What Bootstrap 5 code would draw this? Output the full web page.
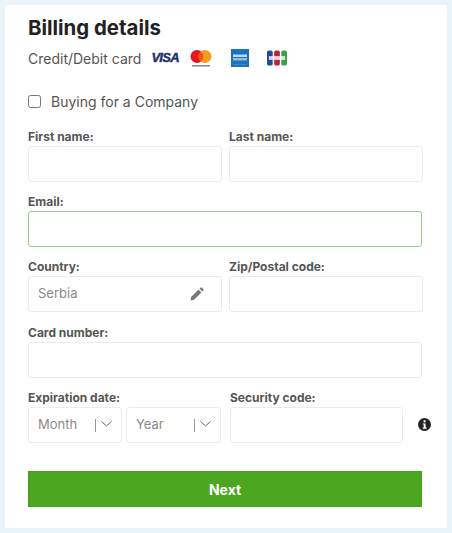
<!doctype html>
<html lang="en"><head><meta charset="utf-8"><title>Billing details</title>
<link rel="stylesheet" href="https://cdn.jsdelivr.net/npm/bootstrap@5.3.0/dist/css/bootstrap.min.css">
<style>
html,body{height:533px;overflow:hidden}
body{background:#e8f4f7;padding:5px;font-family:Inter,"Liberation Sans",sans-serif;color:#555}
.sheet{background:#fff;width:442px;height:523px;padding:11px 25px 0 23px}
.ttl{font-size:20.4px;line-height:24px;font-weight:700;color:#222;margin:0 0 6px}
.payrow{height:24px;font-size:14px;color:#555;margin-bottom:21px}
.payrow svg{display:block;flex:none}
.visa{font-family:"Liberation Sans",sans-serif;font-size:13px;font-weight:700;font-style:italic;color:#1c2f6e;-webkit-text-stroke:.4px #1c2f6e;letter-spacing:-.7px;margin-left:10px;width:27px;flex:none;line-height:14px}
.chk{height:20px;margin-bottom:16px;font-size:14px;color:#555;gap:10px}
.chkbox{width:13px;height:13px;border:1.3px solid #777;border-radius:2.5px;margin:0;flex:none;background:#fff;appearance:none}
.fgroup{margin-bottom:10px}
.fgroup.wide{margin-bottom:11px}
.flabel{display:block;font-size:12px;line-height:19px;font-weight:700;color:#555;margin:0;height:19px}
.fbox{height:36px;border:1.5px solid #ebebeb;border-radius:3px;background:#fff;width:100%;padding:0 9px;font-size:13px;color:#8a8a8a;outline:0}
.fbox.okay{border-color:#96cc87}
.gapx{gap:7px}
.half{width:194px;flex:none}
.mini{width:94px;flex:none;padding:0 9px}
.mini+.mini{width:95px}
.bar{width:1px;height:13px;background:#999;margin-right:5px;flex:none}
.mini svg{flex:none;margin-top:-3px}
.sec{width:173px;flex:none;margin-left:9px}
.info{flex:none;margin:0 0 12px 15px}
.gobtn{width:394px;height:36px;background:#4ca61f;border:1px solid #47a01c;border-radius:0;color:#fff;font-weight:700;font-size:14px;padding:0;margin-top:28px;display:block}
.gobtn:hover{background:#4ca61f;color:#fff}
</style></head><body>
<div class="sheet">
<h1 class="ttl">Billing details</h1>
<div class="payrow d-flex align-items-center">
<span>Credit/Debit card</span>
<span class="visa">VISA</span>
<svg width="22" height="17" viewBox="0 0 22 17" style="margin-left:12px"><circle cx="7" cy="6.500" r="6.500" fill="#e4161f"/><circle cx="15" cy="6.500" r="6.500" fill="#f59e1e"/><path d="M11 1.500a6.500 6.500 0 0 1 0 10a6.500 6.500 0 0 1 0-10" fill="#f0541c"/><rect x="2" y="15" width="18" height="1.500" fill="#888"/></svg>
<svg width="18" height="18" viewBox="0 0 18 18" style="margin-left:19px"><rect width="18" height="18" fill="#1b74b8"/><rect x="2" y="5.500" width="14" height="2.500" fill="#bcd8ec"/><rect x="2" y="9" width="14" height="2.500" fill="#8fbcdd"/><rect x="2" y="15" width="14" height="1" fill="#3f8cc6"/></svg>
<svg width="20" height="16" viewBox="0 0 21 16" style="margin-left:18px"><rect width="6" height="16" rx="2" fill="#1f4e96"/><rect x="7.500" width="6" height="16" rx="2" fill="#c41e3f"/><rect x="15" width="6" height="16" rx="2" fill="#35a24a"/><rect x="2" y="6" width="17" height="4" fill="#fff" opacity=".8"/></svg>
</div>
<label class="chk d-flex align-items-center"><input type="checkbox" class="chkbox"><span>Buying for a Company</span></label>
<div class="d-flex gapx fgroup">
<div class="half"><label class="flabel" for="a1">First name:</label><input id="a1" class="fbox"></div>
<div class="half"><label class="flabel" for="a2">Last name:</label><input id="a2" class="fbox"></div>
</div>
<div class="fgroup"><label class="flabel" for="a3">Email:</label><input id="a3" class="fbox okay"></div>
<div class="d-flex gapx fgroup wide">
<div class="half"><label class="flabel">Country:</label><div class="fbox d-flex align-items-center justify-content-between"><span>Serbia</span>
<svg width="14" height="14" viewBox="0 0 14 14" style="margin-right:8px"><path d="M0.500 13.500l.7-3.500 7.400-7.400 2.800 2.800-7.400 7.400zM9.500 1.700l1-1a1 1 0 0 1 1.400 0l1.400 1.400a1 1 0 0 1 0 1.400l-1 1z" fill="#777"/></svg></div></div>
<div class="half"><label class="flabel" for="a5">Zip/Postal code:</label><input id="a5" class="fbox"></div>
</div>
<div class="fgroup"><label class="flabel" for="a6">Card number:</label><input id="a6" class="fbox"></div>
<div class="d-flex align-items-end">
<div><label class="flabel">Expiration date:</label>
<div class="d-flex" style="gap:4px">
<div class="fbox mini d-flex align-items-center"><span class="flex-grow-1">Month</span><i class="bar"></i><svg width="11" height="6" viewBox="0 0 11 6"><path d="M.5.500l5 4.500 5-4.500" fill="none" stroke="#666" stroke-width="1"/></svg></div>
<div class="fbox mini d-flex align-items-center"><span class="flex-grow-1">Year</span><i class="bar"></i><svg width="11" height="6" viewBox="0 0 11 6"><path d="M.5.500l5 4.500 5-4.500" fill="none" stroke="#666" stroke-width="1"/></svg></div>
</div></div>
<div class="sec"><label class="flabel" for="a7">Security code:</label><input id="a7" class="fbox"></div>
<svg class="info" width="13" height="13" viewBox="0 0 13 13"><circle cx="6.500" cy="6.500" r="6.500" fill="#222"/><rect x="5.600" y="2.300" width="2" height="2" fill="#fff"/><path d="M4.800 5.400h2.800v4.100h1v1.200h-3.900v-1.200h1v-2.900h-.9z" fill="#fff"/></svg>
</div>
<button class="btn gobtn">Next</button>
</div>
</body></html>
